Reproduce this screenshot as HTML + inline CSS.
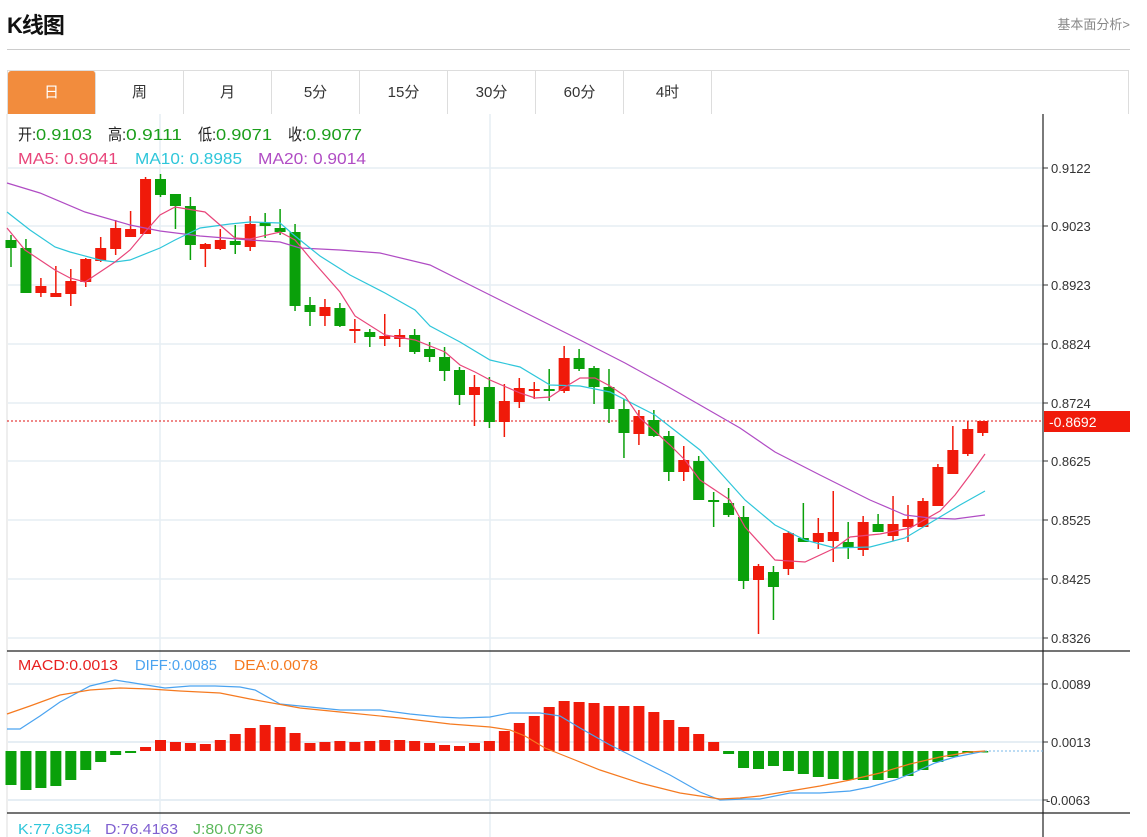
<!DOCTYPE html>
<html><head><meta charset="utf-8"><style>
body{margin:0;background:#fff;width:1147px;height:837px;overflow:hidden;font-family:"Liberation Sans","Noto Sans CJK SC",sans-serif;position:relative}
.t{position:absolute;left:7px;top:8px;font-size:22px;font-weight:bold;color:#111;letter-spacing:-1px}
.r{position:absolute;right:17px;top:14px;font-size:13px;color:#888}
.hr{position:absolute;left:7px;top:49px;width:1123px;height:1px;background:#ccc}
.tabs{position:absolute;left:7px;top:70px;width:1122px;height:44px;border:1px solid #ddd;border-bottom:none;box-sizing:border-box;display:flex}
.tabs div{width:88px;border-right:1px solid #ddd;text-align:center;line-height:44px;font-size:15px;color:#333;box-sizing:border-box}
.tabs div.a{background:#f28c3d;color:#fff;border-radius:3px 3px 0 0}
svg{position:absolute;left:0;top:0}
</style></head><body>
<div class="t">K线图</div><div class="r">基本面分析&gt;</div><div class="hr"></div>
<div class="tabs"><div class="a">日</div><div>周</div><div>月</div><div>5分</div><div>15分</div><div>30分</div><div>60分</div><div>4时</div></div>
<svg id="s" width="1147" height="837" xmlns="http://www.w3.org/2000/svg" font-family="Liberation Sans, Noto Sans CJK SC, sans-serif"></svg>
<script>
var s=document.getElementById('s'),h='';
function L(x1,y1,x2,y2,c,w,d){h+='<line x1="'+x1+'" y1="'+y1+'" x2="'+x2+'" y2="'+y2+'" stroke="'+c+'" stroke-width="'+(w||1)+'"'+(d?' stroke-dasharray="'+d+'"':'')+'/>';}
function T(x,y,t,c,sz){h+='<text x="'+x+'" y="'+y+'" fill="'+c+'" font-size="'+(sz||13)+'">'+t+'</text>';}
function P(pts,c){h+='<polyline fill="none" stroke="'+c+'" stroke-width="1.2" points="'+pts.map(function(p){return p.join(',')}).join(' ')+'"/>';}
L(7,114,7,837,'#ddd');
[168,226,285,344,403,461,520,579,638].forEach(function(y){L(8,y,1043,y,'#e6eef4',1.5)});
[684,742,800].forEach(function(y){L(8,y,1043,y,'#e6eef4',2)});
L(160,114,160,837,'#e6eef4',1.5);L(490,114,490,837,'#e6eef4',1.5);
L(7,651,1130,651,'#222',1.2);L(7,813,1130,813,'#222',1.2);L(1043,114,1043,837,'#222',1.2);
var pl=[['0.9122',168],['0.9023',226],['0.8923',285],['0.8824',344],['0.8724',403],['0.8625',461],['0.8525',520],['0.8425',579],['0.8326',638],['0.0089',684],['0.0013',742],['-0.0063',800]];
pl.forEach(function(p){L(1043,p[1],1048,p[1],'#333');T(p[0][0]=='-'?1046:1051,p[1]+5,p[0],'#333',13)});
L(7,421,1043,421,'#e01010',1,'2,2');
h+='<rect x="1044" y="411" width="86" height="21" fill="#f01a0a"/>';T(1049,427,'-0.8692','#fff',14);
var C=[['g',240,248,235,267],['g',248,293,239,293],['r',286,293,278,297],['r',293,297,266,297],['r',281,294,269,306],['r',259,282,258,287],['r',248,261,237,262],['r',228,249,220,255],['r',229,237,211,237],['r',179,234,177,234],['g',179,195,174,197],['g',194,206,194,229],['g',206,245,197,260],['r',244,249,243,267],['r',240,249,229,250],['g',241,245,225,254],['r',224,247,216,251],['g',223,226,213,238],['g',228,232,209,235],['g',232,306,224,311],['g',305,312,297,326],['r',307,316,299,326],['g',308,326,303,327],['r',329,331,319,343],['g',332,337,329,347],['r',336,339,314,346],['r',335,339,329,347],['g',335,352,329,354],['g',349,357,342,362],['g',357,371,347,381],['g',370,395,367,405],['r',387,395,375,426],['g',387,422,377,428],['r',401,422,384,437],['r',388,402,378,408],['r',389,391,382,399],['g',389,391,369,401],['r',358,391,346,393],['g',358,369,349,371],['g',368,387,366,404],['g',387,409,369,423],['g',409,433,399,458],['r',416,434,410,445],['g',420,436,410,437],['g',436,472,431,481],['r',460,472,446,481],['g',461,500,456,500],['g',500,502,492,527],['g',503,515,488,517],['g',517,581,506,589],['r',566,580,564,634],['g',572,587,566,620],['r',533,569,531,575],['g',538,542,503,542],['r',533,542,518,549],['r',532,541,491,562],['g',542,548,522,559],['r',522,550,516,556],['g',524,532,514,532],['r',524,536,496,541],['r',519,527,505,542],['r',501,527,498,527],['r',467,506,464,506],['r',450,474,426,474],['r',429,454,421,456],['r',421,433,421,436]];
C.forEach(function(c,i){var x=11+i*14.95,col=c[0]=='r'?'#f01a0a':'#0aa00a';L(x,c[3],x,c[4],col,1.5);var bh=Math.max(c[2]-c[1],2);h+='<rect x="'+(x-5.5)+'" y="'+c[1]+'" width="11" height="'+bh+'" fill="'+col+'"/>';});
P([[7,183],[40,193],[85,212],[130,225],[160,231],[200,236],[250,240],[280,242],[300,248],[340,250],[380,253],[430,265],[470,285],[500,300],[520,310],[550,325],[580,340],[625,363],[665,385],[700,405],[740,428],[775,452],[820,475],[870,500],[905,515],[930,518],[955,519],[985,515]],'#b04cc4');
P([[7,212],[30,230],[55,247],[70,252],[100,260],[115,262],[130,260],[160,248],[175,240],[200,228],[230,224],[250,222],[280,223],[295,236],[320,256],[350,275],[385,293],[415,310],[430,326],[460,342],[490,360],[520,367],[550,385],[580,386],[610,392],[655,415],[700,450],[745,500],[775,525],[805,540],[835,548],[870,547],[905,538],[935,520],[960,505],[985,491]],'#2ec6da');
P([[7,228],[25,250],[55,270],[70,278],[85,282],[100,272],[115,262],[130,250],[145,232],[160,215],[175,207],[205,212],[235,238],[250,239],[280,232],[295,240],[310,258],[325,275],[340,292],[355,316],[385,335],[415,340],[445,352],[460,365],[475,372],[490,380],[520,393],[535,398],[550,397],[565,387],[580,378],[595,378],[610,386],[625,396],[640,418],[670,445],[685,460],[700,480],[715,490],[730,500],[745,527],[775,560],[805,562],[835,548],[850,537],[880,534],[910,528],[940,511],[955,495],[970,475],[985,454]],'#e8457a');
var M=[785,790,788,786,780,770,762,755,753,747,740,742,743,744,740,734,728,725,727,733,743,742,741,742,741,740,740,741,743,745,746,743,741,731,723,716,707,701,702,703,706,706,706,712,720,727,734,742,754,768,769,766,771,774,777,779,780,780,780,778,776,770,762,757,753,752];
M.forEach(function(y,i){var x=11+i*14.95,col=y<751?'#f01a0a':'#0aa00a';var t=Math.min(y,751),b=Math.max(y,751);h+='<rect x="'+(x-5.5)+'" y="'+t+'" width="11" height="'+Math.max(b-t,1.5)+'" fill="'+col+'"/>';});
L(985,751,1043,751,'#7ab8e8',1,'2,2');
P([[7,729],[20,729],[40,716],[60,702],[90,686],[115,680],[140,684],[165,688],[190,686],[215,686],[240,687],[255,690],[280,704],[300,706],[340,710],[380,710],[410,714],[440,717],[460,718],[490,717],[510,713],[540,713],[560,716],[580,728],[610,745],[640,760],[670,775],[700,792],[720,800],[745,799],[760,799],[790,793],[820,793],[850,791],[870,787],[895,780],[915,772],[935,763],[955,757],[985,751]],'#4aa3f0');
P([[7,714],[30,706],[60,695],[90,690],[120,688],[150,689],[180,691],[220,693],[250,699],[300,708],[340,712],[400,718],[450,724],[490,727],[510,730],[525,736],[545,748],[570,758],[600,770],[640,783],[680,793],[720,799],[740,798],[760,796],[790,791],[820,786],[850,780],[880,773],[910,764],[940,757],[970,752],[985,751]],'#f57a20');
function TS(x,y,sz,parts){parts.forEach(function(p){h+='<text x="'+(x+p[0])+'" y="'+y+'" font-size="'+sz+'" fill="'+p[2]+'" textLength="'+p[3]+'" lengthAdjust="spacingAndGlyphs">'+p[1]+'</text>';});}
TS(18,140,16,[[0,'开:','#222',18],[18,'0.9103','#1a9e1a',56],[90,'高:','#222',18],[108,'0.9111','#1a9e1a',56],[180,'低:','#222',18],[198,'0.9071','#1a9e1a',56],[270,'收:','#222',18],[288,'0.9077','#1a9e1a',56]]);
TS(18,164,16,[[0,'MA5: 0.9041','#e8457a',100],[117,'MA10: 0.8985','#2ec6da',107],[240,'MA20: 0.9014','#b04cc4',108]]);
TS(18,670,14.5,[[0,'MACD:0.0013','#e82020',100],[117,'DIFF:0.0085','#4aa3f0',82],[216,'DEA:0.0078','#f57a20',84]]);
TS(18,834,14.5,[[0,'K:77.6354','#2ec6da',73],[87,'D:76.4163','#8060d0',73],[175,'J:80.0736','#5cb85c',70]]);
s.innerHTML=h;
</script>
</body></html>
